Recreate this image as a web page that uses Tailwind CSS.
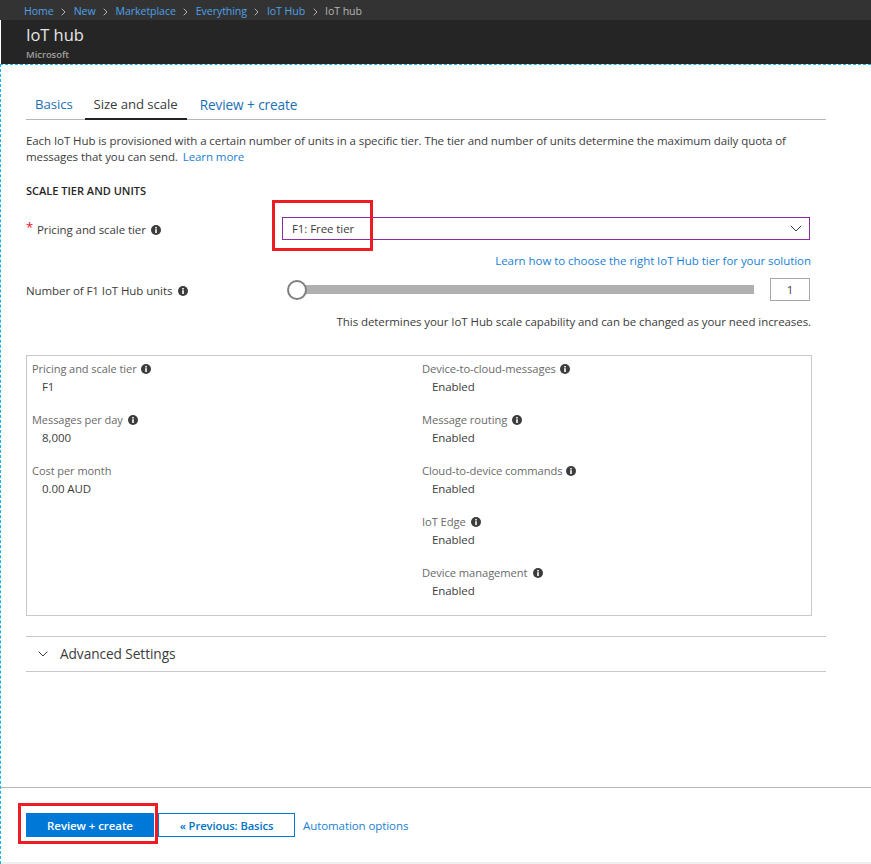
<!DOCTYPE html>
<html lang="en">
<head>
    <meta charset="UTF-8">
    <meta name="viewport" content="width=device-width, initial-scale=1.0">
    <title>IoT hub</title>
    <script src="https://cdn.jsdelivr.net/npm/@tailwindcss/browser@4"></script>
</head>
<body class="bg-white font-['Open_Sans',sans-serif] text-[11.5px] text-[#3c3c3c] tracking-[-0.08px]">
<div class="relative w-[871px] h-[864px] overflow-hidden flex flex-col">
    <!-- Breadcrumb -->
    <div class="h-[20px] bg-[#333333] pl-[24px] pt-[4px] flex items-center text-[#b4b4b4] text-[10.6px]">
        <span class="text-[#4ea1e6]">Home</span>
        <svg class="mx-[7.5px]" width="5" height="8" viewBox="0 0 5 8" fill="none" stroke="#b4b4b4"><path d="M.7.7 4 4 .7 7.3"/></svg>
        <span class="text-[#4ea1e6]">New</span>
        <svg class="mx-[7.5px]" width="5" height="8" viewBox="0 0 5 8" fill="none" stroke="#b4b4b4"><path d="M.7.7 4 4 .7 7.3"/></svg>
        <span class="text-[#4ea1e6]">Marketplace</span>
        <svg class="mx-[7.5px]" width="5" height="8" viewBox="0 0 5 8" fill="none" stroke="#b4b4b4"><path d="M.7.7 4 4 .7 7.3"/></svg>
        <span class="text-[#4ea1e6]">Everything</span>
        <svg class="mx-[7.5px]" width="5" height="8" viewBox="0 0 5 8" fill="none" stroke="#b4b4b4"><path d="M.7.7 4 4 .7 7.3"/></svg>
        <span class="text-[#4ea1e6]">IoT Hub</span>
        <svg class="mx-[7.5px]" width="5" height="8" viewBox="0 0 5 8" fill="none" stroke="#b4b4b4"><path d="M.7.7 4 4 .7 7.3"/></svg>
        <span>IoT hub</span>
    </div>
    <!-- Blade header -->
    <div class="h-[44px] bg-[#252525] pl-[25px] ml-px">
        <div class="text-[16.5px] leading-[30px] text-[#e6e6e6]">IoT hub</div>
        <div class="text-[9.5px] leading-[10px] font-semibold text-[#a0a0a0]">Microsoft</div>
    </div>
    <!-- Blade body -->
    <div class="flex-1 flex flex-col border-t border-l border-dashed border-[#15b4e8]">
        <div class="flex-1 pl-[25px] pr-[45px]">
            <!-- Tabs -->
            <div class="mt-[27px] h-[28px] flex border-b border-[#b5b5b5] text-[13.2px]">
                <div class="px-[9px] leading-[25px] text-[#1a6fb5]">Basics</div>
                <div class="px-[9px] ml-[3px] leading-[25px] border-b-2 border-[#222222] h-[28px] text-[#3c3c3c]">Size and scale</div>
                <div class="pl-[10px] ml-[3px] text-[13.6px] leading-[25px] text-[#1a6fb5]">Review + create</div>
            </div>
            <p class="mt-[13px] leading-[16px] w-[775px]">Each IoT Hub is provisioned with a certain number of units in a specific tier. The tier and number of units determine the maximum daily quota of messages that you can send. <span class="ml-[2px] text-[#1a7fd4]">Learn more</span></p>
            <div class="mt-[19px] font-semibold text-[11px] tracking-normal leading-[14px] text-[#252525]">SCALE TIER AND UNITS</div>

            <!-- Pricing row -->
            <div class="mt-[19px] flex items-center h-[23px]">
                <div class="w-[256px] flex items-center pt-[2px]">
                    <span class="text-[#e81123] w-[11px] -mt-[3px] text-[13px]">*</span>
                    <span>Pricing and scale tier</span>
                    <svg class="ml-[5px]" width="10" height="10" viewBox="0 0 10 10"><circle cx="5" cy="5" r="5" fill="#3c3c3c"/><rect x="4.2" y="4.2" width="1.6" height="3.8" fill="#fff"/><rect x="4.2" y="2" width="1.6" height="1.5" fill="#fff"/></svg>
                </div>
                <div class="w-[528px] h-[23px] border border-[#8a2da5] flex items-center justify-between pl-[9px] pr-[7px]">
                    <span>F1: Free tier</span>
                    <svg width="12" height="7" viewBox="0 0 12 7" fill="none" stroke="#3c3c3c"><path d="M.8.8 6 6 11.2.8"/></svg>
                </div>
            </div>
            <div class="mt-[13px] w-[785px] text-right text-[#1a7fd4] tracking-[-0.05px] leading-[16px]">Learn how to choose the right IoT Hub tier for your solution</div>

            <!-- Units row -->
            <div class="mt-[9px] flex items-center h-[23px]">
                <div class="w-[262px] flex items-center pt-[2px]">
                    <span>Number of F1 IoT Hub units</span>
                    <svg class="ml-[6px]" width="10" height="10" viewBox="0 0 10 10"><circle cx="5" cy="5" r="5" fill="#3c3c3c"/><rect x="4.2" y="4.2" width="1.6" height="3.8" fill="#fff"/><rect x="4.2" y="2" width="1.6" height="1.5" fill="#fff"/></svg>
                </div>
                <div class="relative w-[466px] h-[9px] bg-[#b0b0b0]">
                    <div class="absolute -left-[1px] -top-[5px] w-[20px] h-[20px] rounded-full bg-white border-2 border-[#7f7f7f]"></div>
                </div>
                <div class="ml-[16px] w-[40px] h-[23px] border border-[#a6a6a6] flex items-center justify-center">1</div>
            </div>
            <div class="mt-[13px] w-[785px] text-right leading-[16px]">This determines your IoT Hub scale capability and can be changed as your need increases.</div>

            <!-- Summary -->
            <div class="mt-[25px] w-[786px] h-[261px] border border-[#c8c8c8] flex pl-[5px] pt-[5px]">
                <div class="w-[390px] flex flex-col gap-[17px]">
                    <div>
                        <div class="flex items-center h-[16px] text-[11px] tracking-[-0.05px] text-[#6a6a6a]">Pricing and scale tier<svg class="ml-[4px]" width="10" height="10" viewBox="0 0 10 10"><circle cx="5" cy="5" r="5" fill="#3c3c3c"/><rect x="4.2" y="4.2" width="1.6" height="3.8" fill="#fff"/><rect x="4.2" y="2" width="1.6" height="1.5" fill="#fff"/></svg></div>
                        <div class="pl-[10px] mt-[2px] leading-[16px]">F1</div>
                    </div>
                    <div>
                        <div class="flex items-center h-[16px] text-[11px] tracking-[-0.05px] text-[#6a6a6a]">Messages per day<svg class="ml-[5px]" width="10" height="10" viewBox="0 0 10 10"><circle cx="5" cy="5" r="5" fill="#3c3c3c"/><rect x="4.2" y="4.2" width="1.6" height="3.8" fill="#fff"/><rect x="4.2" y="2" width="1.6" height="1.5" fill="#fff"/></svg></div>
                        <div class="pl-[10px] mt-[2px] leading-[16px]">8,000</div>
                    </div>
                    <div>
                        <div class="flex items-center h-[16px] text-[11px] tracking-[-0.05px] text-[#6a6a6a]">Cost per month</div>
                        <div class="pl-[10px] mt-[2px] leading-[16px]">0.00 AUD</div>
                    </div>
                </div>
                <div class="flex flex-col gap-[17px]">
                    <div>
                        <div class="flex items-center h-[16px] text-[11.2px] text-[#6a6a6a]">Device-to-cloud-messages<svg class="ml-[4px]" width="10" height="10" viewBox="0 0 10 10"><circle cx="5" cy="5" r="5" fill="#3c3c3c"/><rect x="4.2" y="4.2" width="1.6" height="3.8" fill="#fff"/><rect x="4.2" y="2" width="1.6" height="1.5" fill="#fff"/></svg></div>
                        <div class="pl-[10px] mt-[2px] leading-[16px]">Enabled</div>
                    </div>
                    <div>
                        <div class="flex items-center h-[16px] text-[11.2px] text-[#6a6a6a]">Message routing<svg class="ml-[5px]" width="10" height="10" viewBox="0 0 10 10"><circle cx="5" cy="5" r="5" fill="#3c3c3c"/><rect x="4.2" y="4.2" width="1.6" height="3.8" fill="#fff"/><rect x="4.2" y="2" width="1.6" height="1.5" fill="#fff"/></svg></div>
                        <div class="pl-[10px] mt-[2px] leading-[16px]">Enabled</div>
                    </div>
                    <div>
                        <div class="flex items-center h-[16px] text-[11.2px] text-[#6a6a6a]">Cloud-to-device commands<svg class="ml-[4px]" width="10" height="10" viewBox="0 0 10 10"><circle cx="5" cy="5" r="5" fill="#3c3c3c"/><rect x="4.2" y="4.2" width="1.6" height="3.8" fill="#fff"/><rect x="4.2" y="2" width="1.6" height="1.5" fill="#fff"/></svg></div>
                        <div class="pl-[10px] mt-[2px] leading-[16px]">Enabled</div>
                    </div>
                    <div>
                        <div class="flex items-center h-[16px] text-[11.2px] text-[#6a6a6a]">IoT Edge<svg class="ml-[5px]" width="10" height="10" viewBox="0 0 10 10"><circle cx="5" cy="5" r="5" fill="#3c3c3c"/><rect x="4.2" y="4.2" width="1.6" height="3.8" fill="#fff"/><rect x="4.2" y="2" width="1.6" height="1.5" fill="#fff"/></svg></div>
                        <div class="pl-[10px] mt-[2px] leading-[16px]">Enabled</div>
                    </div>
                    <div>
                        <div class="flex items-center h-[16px] text-[11.2px] text-[#6a6a6a]">Device management<svg class="ml-[5px]" width="10" height="10" viewBox="0 0 10 10"><circle cx="5" cy="5" r="5" fill="#3c3c3c"/><rect x="4.2" y="4.2" width="1.6" height="3.8" fill="#fff"/><rect x="4.2" y="2" width="1.6" height="1.5" fill="#fff"/></svg></div>
                        <div class="pl-[10px] mt-[2px] leading-[16px]">Enabled</div>
                    </div>
                </div>
            </div>

            <!-- Advanced settings -->
            <div class="mt-[20px] h-[36px] border-y border-[#c4c8cc] flex items-center pl-[12px] text-[13.7px]">
                <svg width="10" height="6" viewBox="0 0 10 6" fill="none" stroke="#3c3c3c"><path d="M.7.7 5 5 9.3.7"/></svg>
                <span class="ml-[12px]">Advanced Settings</span>
            </div>
        </div>
        <!-- Footer -->
        <div class="h-[75px] border-t border-[#b9b9b9] flex items-start pl-[25px] pt-[25px]">
            <div class="w-[128px] h-[24px] bg-[#0078d7] text-white font-semibold text-center leading-[25px]">Review + create</div>
            <div class="ml-[4px] w-[137px] h-[24px] border border-[#0078d7] text-[#0072c6] text-[11.2px] font-semibold text-center leading-[23px]">« Previous: Basics</div>
            <div class="ml-[8px] leading-[26px] text-[#1a7fd4]">Automation options</div>
        </div>
        <div class="h-[2px] bg-[#efefef]"></div>
    </div>

    <!-- Red annotation boxes -->
    <div class="absolute left-[272px] top-[200px] w-[101px] h-[51px] border-[3px] border-[#ed1c24]"></div>
    <div class="absolute left-[18px] top-[803px] w-[140px] h-[41px] border-[3px] border-[#ed1c24]"></div>
</div>
</body>
</html>
